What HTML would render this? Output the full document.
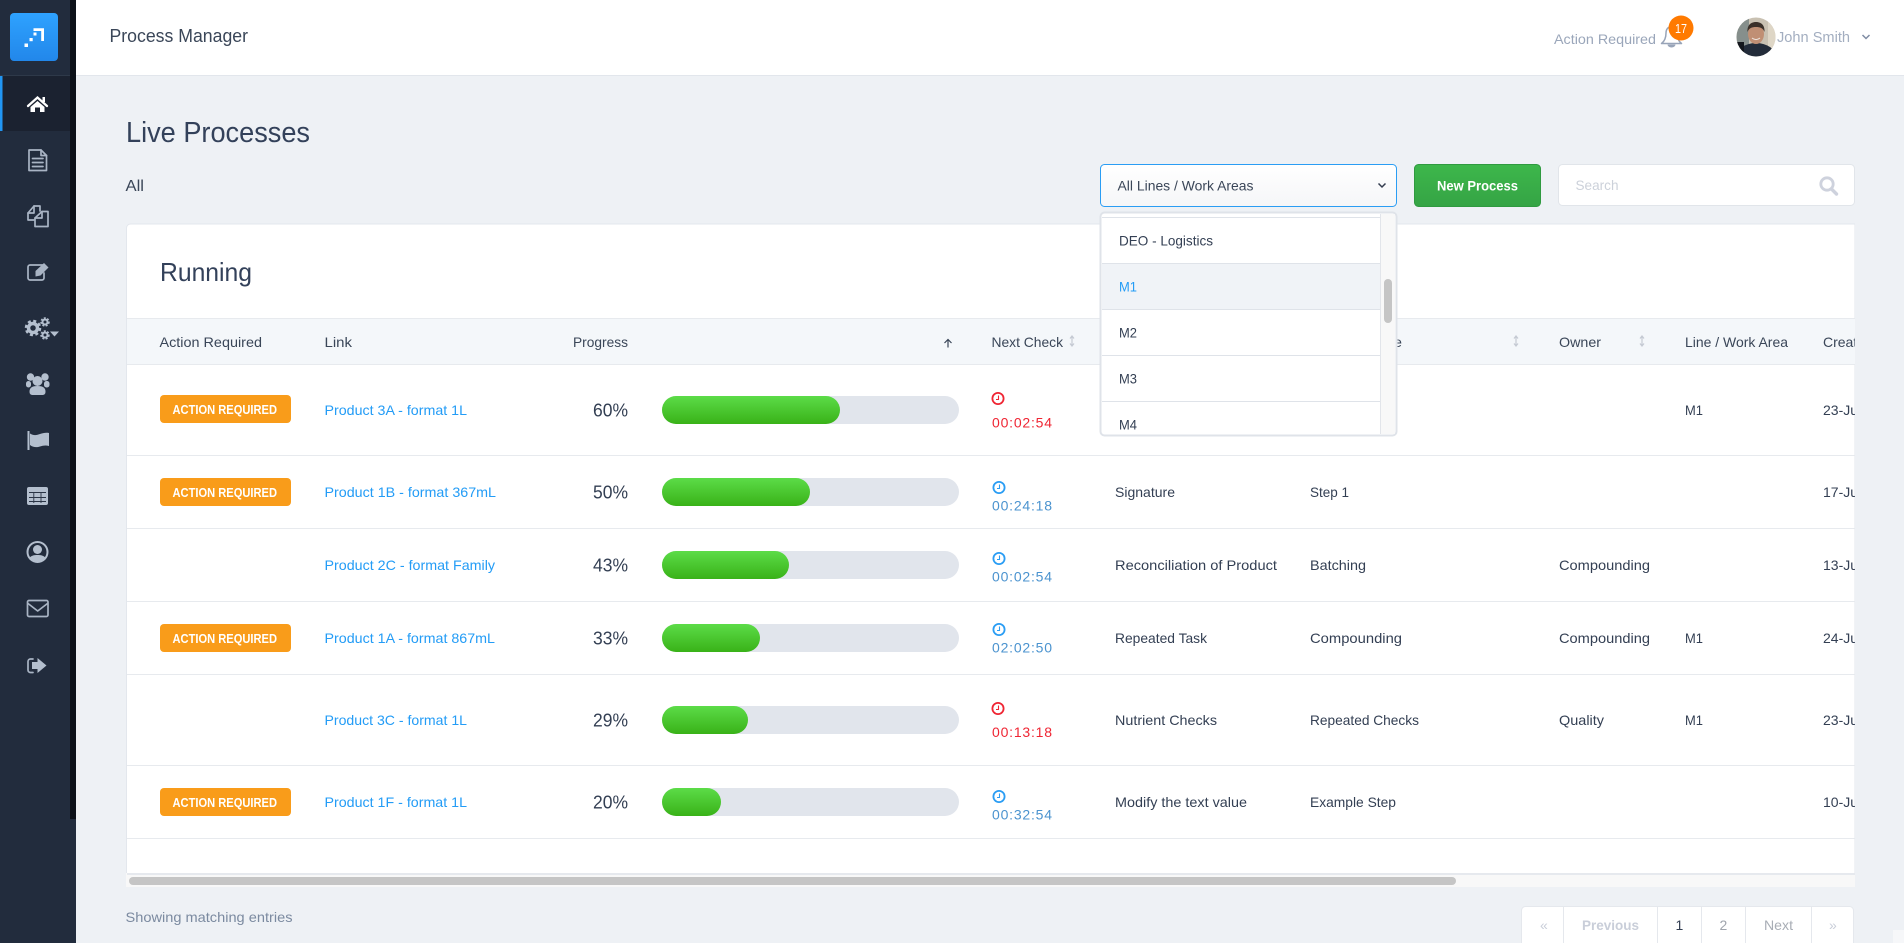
<!DOCTYPE html>
<html lang="en">
<head>
<meta charset="utf-8">
<title>Process Manager</title>
<style>
html,body{margin:0;padding:0;width:1904px;height:943px;overflow:hidden;background:#eef1f5}
svg{display:block;font-family:"Liberation Sans",Arial,sans-serif}
.t{font-size:14px;fill:#333f53}
.h{font-size:14px;fill:#3a4658}
.l{font-size:14px;fill:#239cf6}
.p{font-size:18px;fill:#333f53}
.b{font-size:12.5px;font-weight:700;fill:#fff}
.r{font-size:14px;fill:#ef2533}
.u{font-size:14px;fill:#4b93cf}
.i{fill:none;stroke:#a9b4c4;stroke-width:1.7;stroke-linejoin:round;stroke-linecap:round}
.f{fill:#b4bfce}
.s{fill:none;stroke:#c5cad3;stroke-width:1.2}
.line{fill:#e7eaee}
.pg{font-size:14px;fill:#c9ced9}
</style>
</head>
<body>
<svg xmlns="http://www.w3.org/2000/svg" width="1904" height="943" viewBox="0 0 1904 943">
<defs>
<linearGradient id="logo" x1="0" y1="0" x2="0" y2="1"><stop offset="0" stop-color="#2ea2ff"/><stop offset="1" stop-color="#2287ea"/></linearGradient>
<linearGradient id="gr" x1="0" y1="0" x2="0" y2="1"><stop offset="0" stop-color="#5cdc48"/><stop offset="1" stop-color="#39b218"/></linearGradient>
<linearGradient id="btn" x1="0" y1="0" x2="0" y2="1"><stop offset="0" stop-color="#3db74b"/><stop offset="1" stop-color="#35a445"/></linearGradient>
<linearGradient id="sel" x1="0" y1="0" x2="0" y2="1"><stop offset="0" stop-color="#ffffff"/><stop offset="1" stop-color="#f5f6f8"/></linearGradient>
<clipPath id="card"><rect x="127" y="224" width="1728" height="650"/></clipPath>
<clipPath id="av"><circle cx="1756" cy="37" r="19.5"/></clipPath>
<clipPath id="dd"><rect x="1102" y="214" width="278" height="220"/></clipPath>
</defs>

<!-- main background -->
<rect width="1904" height="943" fill="#eef1f5"/>
<rect x="1893" y="930" width="11" height="13" fill="#f6f7f9"/>

<!-- top bar -->
<rect x="76" y="0" width="1828" height="75" fill="#fff"/>
<rect x="76" y="75" width="1828" height="1" fill="#e2e6ec"/>
<text x="109.500" y="42" font-size="18" fill="#3a4658" textLength="138.500" lengthAdjust="spacingAndGlyphs">Process Manager</text>
<text x="1554" y="44" font-size="14" fill="#9aa6ba" textLength="102" lengthAdjust="spacingAndGlyphs">Action Required</text>
<path d="M1661.500 43.500C1665.500 40.500 1666 36.500 1666 33C1666 29 1668.500 26.500 1671.500 26.500C1675 26.500 1677 29 1677 33C1677 36.500 1677.500 40.500 1681.500 43.500Z" fill="none" stroke="#98a4b8" stroke-width="1.500" stroke-linejoin="round"/>
<path d="M1667.500 44.500h8a4 3 0 0 1-8 0z" fill="#98a4b8"/>
<circle cx="1681" cy="28" r="12.500" fill="#ff7a00"/>
<text x="1675" y="33" font-size="13" fill="#fff" textLength="12" lengthAdjust="spacingAndGlyphs">17</text>
<g clip-path="url(#av)">
<rect x="1736" y="17" width="40" height="40" fill="#c9c1b2"/>
<rect x="1736" y="17" width="13" height="40" fill="#868f8c"/>
<rect x="1768" y="17" width="8" height="40" fill="#ded6c6"/>
<ellipse cx="1756" cy="57" rx="20" ry="14" fill="#232c3a"/>
<rect x="1736" y="42" width="8" height="16" fill="#14171d"/>
<ellipse cx="1756" cy="34" rx="8" ry="10" fill="#c08f74"/>
<path d="M1747.500 32C1747 25 1751 22 1756 22C1761 22 1765 25 1764.500 32C1763 28 1760 27 1756 27C1752 27 1749 28 1747.500 32Z" fill="#3b3029"/>
<path d="M1752 38c2.500 2 5.500 2 8 0" fill="none" stroke="#efe6df" stroke-width="1"/>
</g>
<text x="1777" y="42" font-size="14.500" fill="#a3aec0" textLength="73" lengthAdjust="spacingAndGlyphs">John Smith</text>
<path d="M1862.500 35l3.500 3.500l3.500-3.500" fill="none" stroke="#7f8ca3" stroke-width="1.500"/>

<!-- sidebar -->
<rect x="0" y="0" width="76" height="943" fill="#222c3d"/>
<rect x="70" y="0" width="6" height="819" fill="#0d1119"/>
<rect x="0" y="75" width="70" height="1" fill="#2e3949"/>
<rect x="0" y="76" width="70" height="55" fill="#1b2230"/>
<rect x="0" y="76" width="2.500" height="55" fill="#2196f3"/>
<rect x="10" y="13" width="48" height="48" rx="4" fill="url(#logo)"/>
<path d="M33.500 28.200h10.500v12.800h-2.800v-10h-7.700z" fill="#fff"/>
<rect x="33.500" y="32.500" width="3" height="3" fill="#fff"/>
<rect x="29.500" y="38" width="3.200" height="3.200" fill="#fff"/>
<rect x="24.500" y="43.500" width="3.500" height="3.500" fill="#fff"/>

<!-- home -->
<path d="M28 106L37.500 97.500L47 106" fill="none" stroke="#fff" stroke-width="2.300" stroke-linecap="round"/>
<rect x="42.500" y="97" width="2.500" height="5" fill="#fff"/>
<path d="M30.500 107L37.500 101L44.500 107V112H40V107.500H35V112H30.500Z" fill="#fff"/>
<!-- doc -->
<path class="i" d="M29 150H41L46.500 155.500V170.500H29Z"/>
<path class="i" d="M41 150V155.500H46.500"/>
<path class="i" stroke-width="1.300" d="M32.500 158.500H43M32.500 162.500H43M32.500 166.500H43"/>
<!-- copies -->
<path class="i" d="M34 220H28V213L34 206H40V211"/>
<path class="i" d="M28 213H34V206"/>
<path class="i" d="M42 211.500H48V226.500H35V218L42 211.500Z"/>
<path class="i" d="M35 218H42V211.500"/>
<!-- edit -->
<path class="i" d="M43 265H30a2 2 0 0 0-2 2V278a2 2 0 0 0 2 2H42a2 2 0 0 0 2-2V273"/>
<path d="M35.500 271L44 263L48.500 267.500L40.500 275.500L35.500 276.500Z" fill="#a9b4c4"/>
<!-- cogs -->
<g fill="none" stroke="#b4bfce">
<circle cx="33" cy="328" r="4.500" stroke-width="3.500"/>
<circle cx="33" cy="328" r="7" stroke-width="2.500" stroke-dasharray="3 2.500"/>
<circle cx="45" cy="322" r="2.500" stroke-width="2"/>
<circle cx="45" cy="322" r="4" stroke-width="1.500" stroke-dasharray="2 1.500"/>
<circle cx="45" cy="335" r="2.500" stroke-width="2"/>
<circle cx="45" cy="335" r="4" stroke-width="1.500" stroke-dasharray="2 1.500"/>
</g>
<path class="f" d="M50 331.500H59L54.500 336.500Z"/>
<!-- users -->
<circle class="f" cx="30.500" cy="377" r="3.700"/>
<circle class="f" cx="45" cy="377" r="3.700"/>
<circle class="f" cx="37.500" cy="381" r="5"/>
<rect class="f" x="26" y="381" width="5" height="6.500" rx="2.500"/>
<rect class="f" x="44" y="381" width="5.500" height="6.500" rx="2.500"/>
<path class="f" d="M29.500 391.500c0-4 3-5.500 8-5.500s8 1.500 8 5.500c0 3-1.500 3.500-3.500 3.500h-9c-2 0-3.500-.5-3.500-3.500z"/>
<!-- flag -->
<rect class="f" x="27.500" y="431" width="2" height="19"/>
<path class="f" d="M30 433.500C34 436 37 435 40 434C43 433 46 432.500 49 433V446C46 445 43 445.500 40 446.500C37 447.500 33 447.500 30 445Z"/>
<!-- table -->
<rect class="f" x="27" y="487" width="21" height="18" rx="2"/>
<path d="M29 492.500H46M29 497.500H46M29 501.500H46M33.800 492.500V503M41 492.500V503" stroke="#2a3445" stroke-width=".9" fill="none"/>
<!-- user -->
<circle class="f" cx="37.500" cy="552" r="11"/>
<circle cx="37.500" cy="552" r="9" fill="#222c3d"/>
<circle class="f" cx="37.500" cy="549.500" r="4.500"/>
<path class="f" d="M29.500 558C31 555.500 34 555 37.500 555C41 555 44 555.500 45.500 558C43.500 560.500 41 561.500 37.500 561.500C34 561.500 31.500 560.500 29.500 558Z"/>
<!-- mail -->
<rect class="i" x="27.500" y="600.500" width="20.500" height="16" rx="1.500"/>
<path class="i" d="M28 603.500L37.700 611L47.500 603.500"/>
<!-- sign out -->
<path class="i" stroke-width="2" d="M33 659H30.500a2.500 2.500 0 0 0-2.500 2.500V670a2.500 2.500 0 0 0 2.500 2.500H33"/>
<path class="f" d="M37.500 658L46.500 665.500L37.500 673V669H32V662H37.500Z"/>

<!-- page header -->
<text x="126" y="142" font-size="29" fill="#33415a" textLength="184" lengthAdjust="spacingAndGlyphs">Live Processes</text>
<text x="125.500" y="191" font-size="16" fill="#3a4658" textLength="18.500" lengthAdjust="spacingAndGlyphs">All</text>

<!-- card -->
<path d="M126.500 874V228a4 4 0 0 1 4-4H1855V874Z" fill="#fff" stroke="#e3e7ed"/>
<rect x="1855" y="222" width="2" height="654" fill="#eef1f5"/>
<text x="160" y="281" font-size="26" fill="#33415a" textLength="92" lengthAdjust="spacingAndGlyphs">Running</text>

<g clip-path="url(#card)">
<rect x="127" y="318" width="1728" height="46" fill="#f4f7fa"/>
<rect class="line" x="127" y="318" width="1728" height="1"/>
<rect class="line" x="127" y="364" width="1728" height="1"/>
<rect class="line" x="127" y="455" width="1728" height="1"/>
<rect class="line" x="127" y="528" width="1728" height="1"/>
<rect class="line" x="127" y="601" width="1728" height="1"/>
<rect class="line" x="127" y="674" width="1728" height="1"/>
<rect class="line" x="127" y="765" width="1728" height="1"/>
<rect class="line" x="127" y="838" width="1728" height="1"/>

<!-- head -->
<text class="h" x="159.500" y="347" textLength="102.500" lengthAdjust="spacingAndGlyphs">Action Required</text>
<text class="h" x="324.500" y="347" textLength="27.500" lengthAdjust="spacingAndGlyphs">Link</text>
<text class="h" x="573" y="347" textLength="55" lengthAdjust="spacingAndGlyphs">Progress</text>
<path d="M948 347.500V340M944.500 343L948 339.500L951.500 343" fill="none" stroke="#3a4658" stroke-width="1.200"/>
<text class="h" x="991.500" y="347" textLength="71.500" lengthAdjust="spacingAndGlyphs">Next Check</text>
<path class="s" d="M1072 337V345M1070 338.500L1072 336L1074 338.500M1070 343.500L1072 346L1074 343.500"/>
<text class="h" x="1115" y="347" textLength="30" lengthAdjust="spacingAndGlyphs">Task</text>
<text class="h" x="1310" y="347" textLength="92" lengthAdjust="spacingAndGlyphs">Current Stage</text>
<path class="s" d="M1516 337V345M1514 338.500L1516 336L1518 338.500M1514 343.500L1516 346L1518 343.500"/>
<text class="h" x="1559" y="347" textLength="42" lengthAdjust="spacingAndGlyphs">Owner</text>
<path class="s" d="M1642 337V345M1640 338.500L1642 336L1644 338.500M1640 343.500L1642 346L1644 343.500"/>
<text class="h" x="1685" y="347" textLength="103" lengthAdjust="spacingAndGlyphs">Line / Work Area</text>
<text class="h" x="1823" y="347">Created</text>

<!-- badges -->
<rect x="160" y="395" width="131" height="28" rx="4" fill="#f99c1a"/>
<text class="b" x="172.500" y="414" textLength="104.500" lengthAdjust="spacingAndGlyphs">ACTION REQUIRED</text>
<rect x="160" y="478" width="131" height="28" rx="4" fill="#f99c1a"/>
<text class="b" x="172.500" y="497" textLength="104.500" lengthAdjust="spacingAndGlyphs">ACTION REQUIRED</text>
<rect x="160" y="624" width="131" height="28" rx="4" fill="#f99c1a"/>
<text class="b" x="172.500" y="643" textLength="104.500" lengthAdjust="spacingAndGlyphs">ACTION REQUIRED</text>
<rect x="160" y="788" width="131" height="28" rx="4" fill="#f99c1a"/>
<text class="b" x="172.500" y="807" textLength="104.500" lengthAdjust="spacingAndGlyphs">ACTION REQUIRED</text>

<!-- links -->
<text class="l" x="324.500" y="415" textLength="142.500" lengthAdjust="spacingAndGlyphs">Product 3A - format 1L</text>
<text class="l" x="324.500" y="497" textLength="171.500" lengthAdjust="spacingAndGlyphs">Product 1B - format 367mL</text>
<text class="l" x="324.500" y="570" textLength="170.500" lengthAdjust="spacingAndGlyphs">Product 2C - format Family</text>
<text class="l" x="324.500" y="643" textLength="170.500" lengthAdjust="spacingAndGlyphs">Product 1A - format 867mL</text>
<text class="l" x="324.500" y="725" textLength="142.500" lengthAdjust="spacingAndGlyphs">Product 3C - format 1L</text>
<text class="l" x="324.500" y="807" textLength="142.500" lengthAdjust="spacingAndGlyphs">Product 1F - format 1L</text>

<!-- percents -->
<text class="p" x="593" y="416.500" textLength="35" lengthAdjust="spacingAndGlyphs">60%</text>
<text class="p" x="593" y="498.500" textLength="35" lengthAdjust="spacingAndGlyphs">50%</text>
<text class="p" x="593" y="571.500" textLength="35" lengthAdjust="spacingAndGlyphs">43%</text>
<text class="p" x="593" y="644.500" textLength="35" lengthAdjust="spacingAndGlyphs">33%</text>
<text class="p" x="593" y="726.500" textLength="35" lengthAdjust="spacingAndGlyphs">29%</text>
<text class="p" x="593" y="808.500" textLength="35" lengthAdjust="spacingAndGlyphs">20%</text>

<!-- bars -->
<g fill="#e1e5ec">
<rect x="662" y="396" width="297" height="28" rx="14"/>
<rect x="662" y="478" width="297" height="28" rx="14"/>
<rect x="662" y="551" width="297" height="28" rx="14"/>
<rect x="662" y="624" width="297" height="28" rx="14"/>
<rect x="662" y="706" width="297" height="28" rx="14"/>
<rect x="662" y="788" width="297" height="28" rx="14"/>
</g>
<g fill="url(#gr)">
<rect x="662" y="396" width="178" height="28" rx="14"/>
<rect x="662" y="478" width="148" height="28" rx="14"/>
<rect x="662" y="551" width="127" height="28" rx="14"/>
<rect x="662" y="624" width="98" height="28" rx="14"/>
<rect x="662" y="706" width="86" height="28" rx="14"/>
<rect x="662" y="788" width="59" height="28" rx="14"/>
</g>

<!-- clocks -->
<g fill="none" stroke="#ef2533" stroke-width="1.800">
<circle cx="998" cy="398.500" r="5.600"/>
<circle cx="998" cy="708.500" r="5.600"/>
<path stroke-width="1.100" d="M998.500 395.500V399.500H996M998.500 705.500V709.500H996"/>
</g>
<g fill="none" stroke="#2a9df4" stroke-width="1.800">
<circle cx="999" cy="487.500" r="5.600"/>
<circle cx="999" cy="558.500" r="5.600"/>
<circle cx="999" cy="629.500" r="5.600"/>
<circle cx="999" cy="796.500" r="5.600"/>
<path stroke-width="1.100" d="M999.500 484.500V488.500H997M999.500 555.500V559.500H997M999.500 626.500V630.500H997M999.500 793.500V797.500H997"/>
</g>
<text class="r" x="992" y="427.500" textLength="60" lengthAdjust="spacing">00:02:54</text>
<text class="u" x="992" y="510.500" textLength="60" lengthAdjust="spacing">00:24:18</text>
<text class="u" x="992" y="581.500" textLength="60" lengthAdjust="spacing">00:02:54</text>
<text class="u" x="992" y="652.500" textLength="60" lengthAdjust="spacing">02:02:50</text>
<text class="r" x="992" y="737" textLength="60" lengthAdjust="spacing">00:13:18</text>
<text class="u" x="992" y="819.500" textLength="60" lengthAdjust="spacing">00:32:54</text>

<!-- task / step -->
<text class="t" x="1115" y="497" textLength="60" lengthAdjust="spacingAndGlyphs">Signature</text>
<text class="t" x="1310" y="497" textLength="39" lengthAdjust="spacingAndGlyphs">Step 1</text>
<text class="t" x="1115" y="570" textLength="162" lengthAdjust="spacingAndGlyphs">Reconciliation of Product</text>
<text class="t" x="1310" y="570" textLength="56" lengthAdjust="spacingAndGlyphs">Batching</text>
<text class="t" x="1115" y="643" textLength="92" lengthAdjust="spacingAndGlyphs">Repeated Task</text>
<text class="t" x="1310" y="643" textLength="92" lengthAdjust="spacingAndGlyphs">Compounding</text>
<text class="t" x="1115" y="725" textLength="102" lengthAdjust="spacingAndGlyphs">Nutrient Checks</text>
<text class="t" x="1310" y="725" textLength="109" lengthAdjust="spacingAndGlyphs">Repeated Checks</text>
<text class="t" x="1115" y="807" textLength="132" lengthAdjust="spacingAndGlyphs">Modify the text value</text>
<text class="t" x="1310" y="807" textLength="86" lengthAdjust="spacingAndGlyphs">Example Step</text>

<!-- owner / line -->
<text class="t" x="1559" y="570" textLength="91" lengthAdjust="spacingAndGlyphs">Compounding</text>
<text class="t" x="1559" y="643" textLength="91" lengthAdjust="spacingAndGlyphs">Compounding</text>
<text class="t" x="1559" y="725" textLength="45" lengthAdjust="spacingAndGlyphs">Quality</text>
<text class="t" x="1685" y="415" textLength="18" lengthAdjust="spacingAndGlyphs">M1</text>
<text class="t" x="1685" y="643" textLength="18" lengthAdjust="spacingAndGlyphs">M1</text>
<text class="t" x="1685" y="725" textLength="18" lengthAdjust="spacingAndGlyphs">M1</text>

<!-- dates -->
<text class="t" x="1823" y="415">23-Jul-2019</text>
<text class="t" x="1823" y="497">17-Jul-2019</text>
<text class="t" x="1823" y="570">13-Jul-2019</text>
<text class="t" x="1823" y="643">24-Jul-2019</text>
<text class="t" x="1823" y="725">23-Jul-2019</text>
<text class="t" x="1823" y="807">10-Jul-2019</text>
</g>

<!-- horizontal scrollbar -->
<rect x="126" y="873" width="1729" height="14" fill="#f8f8f8"/>
<rect x="127" y="873" width="1728" height="2" fill="#e6e9ee"/>
<rect x="129" y="877" width="1327" height="8" rx="4" fill="#c5c5c5"/>

<!-- filter row -->
<rect x="1100.500" y="164.500" width="296" height="42" rx="4" fill="url(#sel)" stroke="#2a9df4"/>
<text x="1117.500" y="190.500" font-size="14" fill="#3a4658" textLength="136" lengthAdjust="spacingAndGlyphs">All Lines / Work Areas</text>
<path d="M1378.500 183.500l3.500 3.500l3.500-3.500" fill="none" stroke="#333d4f" stroke-width="1.500"/>

<rect x="1414.500" y="164.500" width="126" height="42" rx="4" fill="url(#btn)" stroke="#2f9a40"/>
<text x="1437" y="190.500" font-size="14" font-weight="700" fill="#fff" textLength="81" lengthAdjust="spacingAndGlyphs">New Process</text>

<rect x="1558.500" y="164.500" width="296" height="41" rx="4" fill="#fff" stroke="#e1e5ea"/>
<text x="1575.500" y="190" font-size="14" fill="#ccd1da" textLength="43" lengthAdjust="spacingAndGlyphs">Search</text>
<circle cx="1827" cy="184" r="6.200" fill="none" stroke="#ced2dd" stroke-width="2.800"/>
<path d="M1831.500 189L1836.500 194" stroke="#ced2dd" stroke-width="3.400" stroke-linecap="round"/>

<!-- dropdown -->
<rect x="1100.500" y="212.500" width="296" height="223" rx="4" fill="#fff" stroke="#dfe3e9" stroke-width="2"/>
<rect x="1380" y="214" width="15" height="220" fill="#f8f8f8"/>
<rect x="1380" y="214" width="1" height="220" fill="#e2e5ea"/>
<rect x="1384" y="279" width="8" height="44" rx="4" fill="#c5c5c5"/>
<g clip-path="url(#dd)">
<rect x="1102" y="264" width="278" height="45" fill="#f0f3f7"/>
<rect x="1102" y="217" width="278" height="1" fill="#dfe3e9"/>
<rect x="1102" y="263" width="278" height="1" fill="#dfe3e9"/>
<rect x="1102" y="309" width="278" height="1" fill="#dfe3e9"/>
<rect x="1102" y="355" width="278" height="1" fill="#dfe3e9"/>
<rect x="1102" y="401" width="278" height="1" fill="#dfe3e9"/>
<text x="1119" y="245.500" font-size="14" fill="#333f53" textLength="94" lengthAdjust="spacingAndGlyphs">DEO - Logistics</text>
<text x="1119" y="291.500" font-size="14" fill="#239cf6" textLength="18" lengthAdjust="spacingAndGlyphs">M1</text>
<text x="1119" y="337.500" font-size="14" fill="#333f53" textLength="18" lengthAdjust="spacingAndGlyphs">M2</text>
<text x="1119" y="383.500" font-size="14" fill="#333f53" textLength="18" lengthAdjust="spacingAndGlyphs">M3</text>
<text x="1119" y="429.500" font-size="14" fill="#333f53" textLength="18" lengthAdjust="spacingAndGlyphs">M4</text>
</g>

<!-- footer -->
<text x="125.500" y="922" font-size="14" fill="#7b8aa0" textLength="167" lengthAdjust="spacingAndGlyphs">Showing matching entries</text>
<rect x="1521.500" y="906.500" width="332" height="40" rx="4" fill="#fff" stroke="#e5e8ed"/>
<path d="M1563.500 907V943M1657.500 907V943M1701.500 907V943M1745.500 907V943M1811.500 907V943" stroke="#e5e8ed"/>
<text class="pg" x="1540" y="930">«</text>
<text class="pg" x="1582" y="930" font-weight="700" textLength="57" lengthAdjust="spacingAndGlyphs">Previous</text>
<text x="1675.500" y="930" font-size="14" fill="#333f53">1</text>
<text x="1719.500" y="930" font-size="14" fill="#a0a5ad">2</text>
<text x="1764" y="930" font-size="14" fill="#a8adb5" textLength="29" lengthAdjust="spacingAndGlyphs">Next</text>
<text class="pg" x="1829" y="930">»</text>
</svg>
</body>
</html>
